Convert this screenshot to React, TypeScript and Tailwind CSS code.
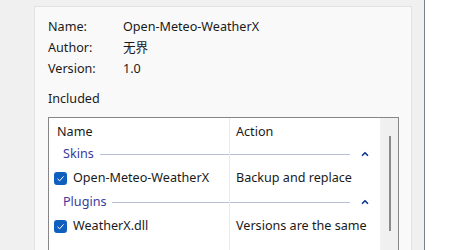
import { ChevronUp } from "lucide-react";

const font = { fontFamily: '"Noto Sans", "Noto Sans CJK SC", sans-serif' };

function Check() {
  return (
    <div className="flex h-[13px] w-[13px] items-center justify-center rounded-[3px] bg-[#0f5fbf]">
      <svg width="9" height="9" viewBox="0 0 9 9" fill="none">
        <path d="M1.5 4.8 L3.6 6.8 L7.6 2.4" stroke="white" strokeWidth="1" />
      </svg>
    </div>
  );
}

function Group({ label }: { label: string }) {
  return (
    <div className="flex h-[24px] items-center pl-[14px] pr-[10px]">
      <span className="text-[#3a3a9c]">{label}</span>
      <div className="mx-[6px] h-px flex-1 bg-[#b8bfd4]" />
      <ChevronUp size={10} strokeWidth={4} className="ml-[4px] text-[#0a3796]" />
    </div>
  );
}

function Item({ name, action }: { name: string; action: string }) {
  return (
    <div className="flex h-[24px] items-center">
      <div className="flex w-[181px] items-center gap-[6px] pl-[5px]">
        <Check />
        <span>{name}</span>
      </div>
      <span className="pl-[6px]">{action}</span>
    </div>
  );
}

export default function App() {
  return (
    <div
      className="flex h-[250px] w-[450px] overflow-hidden bg-white text-[12.6px] leading-none text-[#1a1a1a]"
      style={font}
    >
      <div className="w-[424px] bg-[#f0f0f0] pl-[34px] pt-[6px]">
        <div className="h-[260px] w-[378px] border border-[#e2e2e2] bg-[#f9f9f9] pl-[13px] pt-[10px]">
          <div className="grid grid-cols-[75px_1fr]">
            <div className="flex h-[21px] items-center">Name:</div>
            <div className="flex h-[21px] items-center">Open-Meteo-WeatherX</div>
            <div className="flex h-[21px] items-center">Author:</div>
            <div className="flex h-[21px] items-center">无界</div>
            <div className="flex h-[21px] items-center">Version:</div>
            <div className="flex h-[21px] items-center">1.0</div>
          </div>
          <div className="mt-[9px] flex h-[21px] items-center">Included</div>
          <div className="mt-[7px] flex h-[200px] w-[351px] border border-[#868686] bg-white">
            <div className="relative flex-1">
              <div className="absolute bottom-0 left-[180px] top-0 w-px bg-[#e6ebf2]" />
              <div className="flex h-[24px] items-center pt-[4px]">
                <span className="w-[181px] pl-[8px]">Name</span>
                <span className="pl-[6px]">Action</span>
              </div>
              <Group label="Skins" />
              <Item name="Open-Meteo-WeatherX" action="Backup and replace" />
              <Group label="Plugins" />
              <Item name="WeatherX.dll" action="Versions are the same" />
            </div>
            <div className="flex w-[18px] justify-center border-l border-[#f4f4f4] bg-[#f0f0f0] pt-[18px]">
              <div className="h-[95px] w-[2px] bg-[#8a8a8a]" />
            </div>
          </div>
        </div>
      </div>
      <div className="w-px bg-[#74818d]" />
    </div>
  );
}
